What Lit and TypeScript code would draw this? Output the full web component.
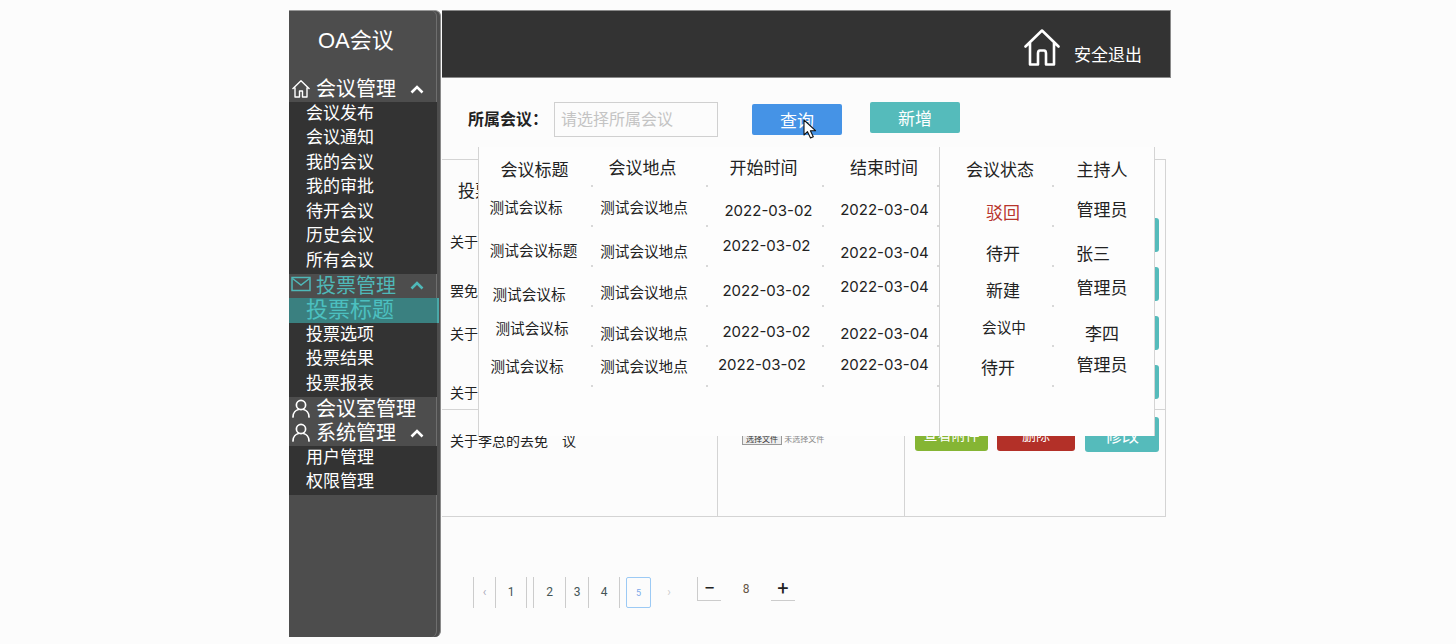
import { css, html, LitElement, svg } from "lit";
import { customElement } from "lit/decorators.js";

const homeSmall = svg`<path d="M1.5 10 10 1.8 18.5 10M4 8.5V18h4.5v-6h3v6H16V8.5" fill="none" stroke="currentColor" stroke-width="1.4" stroke-linejoin="round"/>`;
const mail = svg`<rect x="1" y="1.5" width="18" height="13" fill="none" stroke="currentColor" stroke-width="1.5"/><path d="M1.5 2.5 10 9l8.500-6.500" fill="none" stroke="currentColor" stroke-width="1.5"/>`;
const user = svg`<circle cx="10" cy="6" r="4.600" fill="none" stroke="currentColor" stroke-width="1.700"/><path d="M2 18c0-4.500 3-7 5.500-7.500M18 18c0-4.500-3-7-5.500-7.500" fill="none" stroke="currentColor" stroke-width="1.700" stroke-linecap="round"/>`;

interface Group {
  label: string;
  icon: unknown;
  chevron: boolean;
  active?: boolean;
  items: string[];
}

const groups: Group[] = [
  { label: "会议管理", icon: homeSmall, chevron: true, items: ["会议发布", "会议通知", "我的会议", "我的审批", "待开会议", "历史会议", "所有会议"] },
  { label: "投票管理", icon: mail, chevron: true, active: true, items: ["投票标题", "投票选项", "投票结果", "投票报表"] },
  { label: "会议室管理", icon: user, chevron: false, items: [] },
  { label: "系统管理", icon: user, chevron: true, items: ["用户管理", "权限管理"] },
];

// text, dx, dy: the cells sit a little off centre in the reference
type Cell = [string, number, number];
const D = "2022-03-02";
const E = "2022-03-04";
const P = "测试会议地点";
const T = "测试会议标";
const head: Cell[] = [["会议标题", -1.5, 4], ["会议地点", -8, 2], ["开始时间", -2.5, 2], ["结束时间", 2.5, 2], ["会议状态", 3, 4], ["主持人", -2, 4]];
const rows: Cell[][] = [
  [[T, -10, 1], [P, -6.5, 1], [D, 2.5, 4], [E, 3, 3], ["驳回", 6, 7], ["管理员", -2, 4]],
  [["测试会议标题", -2.5, 4], [P, -6.5, 5], [D, 0.5, -1], [E, 3, 6], ["待开", 6, 8], ["张三", -11, 8]],
  [[T, -7, 8], [P, -6.5, 6], [D, 0.5, 4], [E, 3, 0], ["新建", 6, 5], ["管理员", -2, 2]],
  [[T, -4, 2], [P, -6.5, 7], [D, 0.5, 5], [E, 3, 7], ["会议中", 7, 1], ["李四", -2, 8]],
  [[T, -9, 0], [P, -6.5, 0], [D, -4, -2], [E, 3, -2], ["待开", 1, 2], ["管理员", -2, -1]],
];

const under = [
  { text: "关于李总的会议", top: 20 },
  { text: "罢免张总的会议", top: 20 },
  { text: "关于王总的会议", top: 14 },
  { text: "关于赵总的会议", top: 24 },
];

const pages = [
  { label: "‹", cls: "first w23 faint" },
  { label: "1", cls: "w31" },
  { label: "2", cls: "w32 gap" },
  { label: "3", cls: "w23" },
  { label: "4", cls: "w31" },
];

@customElement("app-root")
export class AppRoot extends LitElement {
  private cellStyle(c: Cell) {
    return `transform:translate(${c[1]}px,${c[2]}px)`;
  }

  private renderCell(c: Cell, i: number, kind: string) {
    const tone = c[0] === "驳回" ? "red" : "";
    const type = i < 2 && kind === "body" ? "small" : i < 4 && kind === "body" ? "date" : c[0] === "会议中" ? "small" : "";
    return html`<div class="cell ${i === 4 ? "split" : ""}">
      <span class="${type} ${tone}" style=${this.cellStyle(c)}>${c[0]}</span>
    </div>`;
  }

  render() {
    return html`
      <div class="shell">
        <aside class="side">
          <div class="logo">OA会议</div>
          ${groups.map(
            (g) => html`
              <div class="group ${g.active ? "on" : ""}">
                <svg class="gi" viewBox="0 0 20 20">${g.icon}</svg>
                <span>${g.label}</span>
                ${g.chevron
                  ? html`<svg class="chev" viewBox="0 0 14 9"><path d="M1.500 7.500 7 2l5.500 5.500" fill="none" stroke="currentColor" stroke-width="2.600"/></svg>`
                  : ""}
              </div>
              ${g.items.map(
                (t) => html`<div class="item ${t === "投票标题" ? "cur" : ""}">${t}</div>`
              )}
            `
          )}
        </aside>
        <main class="main">
          <header class="top">
            <svg class="home" viewBox="0 0 36 38">
              <path d="M1.500 17.500 18 1.500l16.500 16M6 14v21.500h8V24.500c0-2 1-3 2-3h4c1 0 2 1 2 3v11h8V14" fill="none" stroke="#fff" stroke-width="2.600" stroke-linecap="round" stroke-linejoin="round"/>
            </svg>
            <span>安全退出</span>
          </header>
          <div class="bar">
            <label>所属会议：</label>
            <div class="input">请选择所属会议</div>
            <button class="btn query">查询</button>
            <button class="btn add">新增</button>
          </div>
          <section class="table">
            <div class="thead">投票标题</div>
            ${under.map(
              (r) => html`<div class="urow">
                <span style="margin-top:${r.top}px">${r.text}</span>
                <i class="stub"></i>
              </div>`
            )}
            <div class="last">
              <div class="c1">关于李总的丢免<span class="hole">议</span></div>
              <div class="c2"><span class="file"><b>选择文件</b> 未选择文件</span></div>
              <div class="c3">
                <button class="op green">查看附件</button>
                <button class="op crimson">删除</button>
                <button class="op teal">修改</button>
              </div>
            </div>
          </section>
          <nav class="pager">
            ${pages.map((p) => html`<span class="pg ${p.cls}">${p.label}</span>`)}
            <span class="pg cur5">5</span>
            <span class="pg next">›</span>
            <span class="step minus">−</span>
            <span class="num">8</span>
            <span class="step plus">+</span>
          </nav>
          <div class="pop">
            <div class="grid">
              ${head.map((c, i) => this.renderCell(c, i, "head"))}
              ${rows.map((r) => r.map((c, i) => this.renderCell(c, i, "body")))}
              <div class="rest"></div>
            </div>
          </div>
          <svg class="cursor" viewBox="0 0 14 20">
            <path d="M1 1v15l3.500-3.300L7.500 19l2.800-1.300-2.900-6H12.500z" fill="#fff" stroke="#111" stroke-width="1.100" stroke-linejoin="round"/>
          </svg>
        </main>
      </div>
    `;
  }

  static styles = css`
    :host {
      display: block;
      height: 644px;
      overflow: hidden;
      background: #fcfcfc;
      font-family: "Liberation Sans", "Noto Sans CJK SC", sans-serif;
      color: #222;
    }
    .shell {
      display: flex;
      padding: 10px 0 0 289px;
    }
    .side {
      width: 151px;
      height: 626px;
      flex: none;
      background: #4d4d4d;
      border-top: 1px solid #999;
      border-right: 1px solid #8a8a8a;
      border-radius: 0 6px 6px 0;
      color: #fff;
      box-shadow: inset -3px 0 0 #4d4d4d, inset -4px 0 0 #6e6e6e;
    }
    .logo {
      height: 66px;
      padding: 16px 0 0 29px;
      box-sizing: border-box;
      font-size: 22px;
      line-height: 28px;
    }
    .group {
      height: 24.500px;
      display: flex;
      align-items: center;
      font-size: 20px;
      width: 147px;
      background: #4d4d4d;
      line-height: 24px;
    }
    .group span {
      margin-left: 5px;
    }
    .group.on {
      color: #4fb8b8;
    }
    .gi {
      width: 20px;
      height: 20px;
      margin-left: 2px;
      flex: none;
    }
    .chev {
      width: 14px;
      height: 9px;
      margin-left: auto;
      margin-right: 12px;
    }
    .item {
      height: 24.600px;
      width: 148px;
      box-sizing: border-box;
      padding-left: 17px;
      font-size: 17px;
      line-height: 24px;
      background: #333;
    }
    .item.cur {
      background: #3a8080;
      color: #4cc0c0;
      font-size: 22px;
      border-right: 2px solid #4aa8a8;
      width: 150px;
    }
    .main {
      position: relative;
      width: 729px;
      flex: none;
      margin-left: 1px;
    }
    .top {
      height: 68px;
      box-sizing: border-box;
      background: #333;
      border: 1px solid #8a8a8a;
      border-left: 0;
      color: #fff;
      display: flex;
      align-items: flex-end;
      justify-content: flex-end;
      padding: 0 28px 10px 0;
      font-size: 17px;
      line-height: 22px;
    }
    .home {
      width: 36px;
      height: 38px;
      margin: 0 14px 0 0;
      position: relative;
      top: 0;
    }
    .bar {
      height: 81px;
      box-sizing: border-box;
      padding: 24px 0 0 26px;
      display: flex;
      align-items: flex-start;
    }
    .bar label {
      width: 86px;
      font-size: 16px;
      font-weight: bold;
      line-height: 35px;
      color: #222;
    }
    .input {
      width: 164px;
      height: 35px;
      box-sizing: border-box;
      border: 1px solid #d0d0d0;
      color: #c4c4c4;
      font-size: 16px;
      line-height: 33px;
      padding-left: 6px;
    }
    .btn {
      width: 90px;
      height: 31px;
      border: 0;
      border-radius: 2px;
      color: #fff;
      font: inherit;
      font-size: 17px;
      padding: 0;
    }
    .query {
      background: #4593e6;
      margin: 2px 0 0 34px;
    }
    .add {
      background: #55bbbb;
      margin-left: 28px;
    }
    .table {
      width: 724px;
      height: 358px;
      box-sizing: border-box;
      border: 1px solid #d4d4d4;
      border-left: 0;
    }
    .thead {
      height: 53px;
      padding: 21px 0 0 16px;
      box-sizing: border-box;
      font-size: 17px;
      line-height: 22px;
    }
    .urow {
      height: 49px;
      display: flex;
      justify-content: space-between;
      font-size: 14px;
      line-height: 18px;
      padding-left: 8px;
    }
    .stub {
      width: 74px;
      height: 34px;
      margin: 5px 6px 0 0;
      background: #55bbbb;
      border-radius: 3px;
    }
    .last {
      height: 107px;
      display: grid;
      grid-template-columns: 275px 188px 1fr;
      border-top: 1px solid #d4d4d4;
      font-size: 14px;
    }
    .c1 {
      padding: 22px 0 0 8px;
      line-height: 18px;
    }
    .hole {
      margin-left: 14px;
    }
    .c2 {
      border-left: 1px solid #d4d4d4;
      border-right: 1px solid #d4d4d4;
      padding: 23px 0 0 24px;
      font-size: 8px;
      color: #888;
    }
    .file b {
      font-weight: normal;
      color: #333;
      border: 1px solid #999;
      padding: 0 3px;
      background: #eee;
    }
    .c3 {
      display: flex;
      padding: 7px 0 0 10px;
      gap: 9px;
      align-items: flex-start;
    }
    .op {
      height: 34px;
      border: 0;
      padding: 0;
      color: #fff;
      font: inherit;
      font-size: 14px;
      border-radius: 3px;
    }
    .green {
      width: 73px;
      background: #85b534;
    }
    .crimson {
      width: 78px;
      background: #b33028;
    }
    .teal {
      width: 74px;
      margin-left: 1px;
      height: 35px;
      background: #55bbbb;
      font-size: 17px;
    }
    .pager {
      margin: 60px 0 0 31px;
      display: flex;
      align-items: flex-start;
      height: 31px;
      color: #455;
      font-family: Roboto, "Liberation Sans", sans-serif;
      font-size: 12px;
    }
    .pg {
      height: 31px;
      line-height: 31px;
      text-align: center;
      box-sizing: border-box;
      border-right: 1px solid #ccc;
      flex: none;
    }
    .first {
      border-left: 1px solid #ccc;
    }
    .faint {
      color: #aab;
    }
    .gap {
      margin-left: 6px;
      border-left: 1px solid #ccc;
    }
    .w23 {
      width: 23px;
    }
    .w31 {
      width: 31px;
    }
    .w32 {
      width: 33px;
    }
    .cur5 {
      width: 25px;
      margin-left: 6px;
      border: 1px solid #9ccaf5;
      border-radius: 2px;
      color: #7aa8ea;
      font-size: 9px;
    }
    .next {
      width: 36px;
      border: 0;
      color: #ccc;
    }
    .step {
      width: 24px;
      height: 24px;
      box-sizing: border-box;
      border-bottom: 1px solid #ccc;
      text-align: center;
      font-size: 20px;
      line-height: 22px;
      color: #222;
    }
    .minus {
      margin-left: 10px;
      border-left: 1px solid #ccc;
    }
    .num {
      width: 50px;
      text-align: center;
      line-height: 25px;
      color: #654;
    }
    .pop {
      position: absolute;
      left: 36px;
      top: 137px;
      width: 677px;
      height: 289px;
      box-sizing: border-box;
      background: #fdfdfd;
      border-left: 1px solid #d4d4d4;
      border-right: 1px solid #d4d4d4;
    }
    .grid {
      display: grid;
      height: 100%;
      grid-template-columns: 114px 115px 116px 115px 115px 1fr;
      grid-template-rows: repeat(6, 40px) 1fr;
    }
    .cell {
      position: relative;
      display: flex;
      align-items: center;
      justify-content: center;
      font-size: 17px;
      line-height: 22px;
      color: #222;
      white-space: nowrap;
    }
    .cell:not(:nth-child(6n))::after {
      content: "";
      position: absolute;
      right: 0;
      bottom: 0;
      width: 2px;
      height: 2px;
      background: #d8d8d8;
    }
    .split {
      border-left: 1px solid #d4d4d4;
    }
    .rest {
      grid-column: 5 / 7;
      border-left: 1px solid #d4d4d4;
      margin-top: 0;
    }
    .small {
      font-size: 14.600px;
    }
    .date {
      font-family: Inter, "Liberation Sans", sans-serif;
      font-size: 15px;
    }
    .red {
      color: #b8352c;
    }
    .cursor {
      position: absolute;
      left: 361px;
      top: 109px;
      width: 14px;
      height: 20px;
    }
  `;
}
